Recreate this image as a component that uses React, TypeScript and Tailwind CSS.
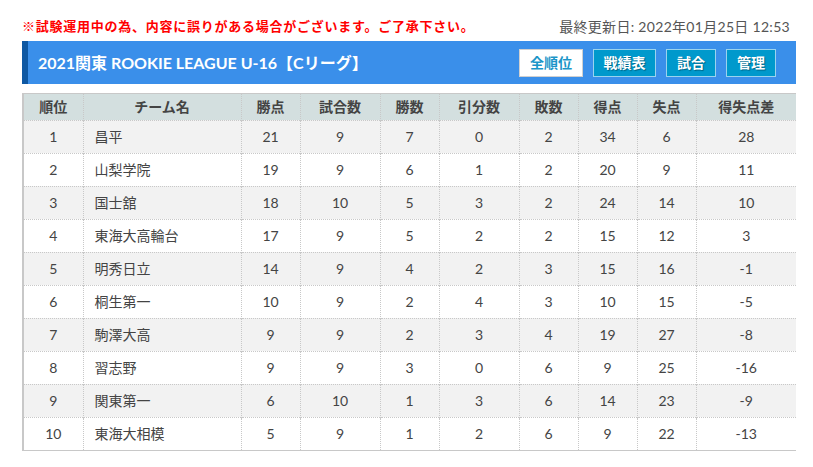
import React from "react";

const rows: [number, string, number, number, number, number, number, number, number, number][] = [
  [1, "昌平", 21, 9, 7, 0, 2, 34, 6, 28],
  [2, "山梨学院", 19, 9, 6, 1, 2, 20, 9, 11],
  [3, "国士舘", 18, 10, 5, 3, 2, 24, 14, 10],
  [4, "東海大高輪台", 17, 9, 5, 2, 2, 15, 12, 3],
  [5, "明秀日立", 14, 9, 4, 2, 3, 15, 16, -1],
  [6, "桐生第一", 10, 9, 2, 4, 3, 10, 15, -5],
  [7, "駒澤大高", 9, 9, 2, 3, 4, 19, 27, -8],
  [8, "習志野", 9, 9, 3, 0, 6, 9, 25, -16],
  [9, "関東第一", 6, 10, 1, 3, 6, 14, 23, -9],
  [10, "東海大相模", 5, 9, 1, 2, 6, 9, 22, -13],
];

const headers = ["順位", "チーム名", "勝点", "試合数", "勝数", "引分数", "敗数", "得点", "失点", "得失点差"];
const widths = [59, 158, 59, 80, 59, 80, 59, 59, 59, 100];

export default function App() {
  return (
    <div
      className="w-[813px] h-[467px] bg-white text-[#444]"
      style={{ fontFamily: 'Lato, "Noto Sans CJK JP", sans-serif' }}
    >
      <div className="px-[22px] pt-[16px] w-[818px]">
        <div className="flex items-center justify-between h-[21px] pr-[6px]">
          <span className="text-[13px] font-bold text-[#ff0000] tracking-[0.75px]">
            ※試験運用中の為、内容に誤りがある場合がございます。ご了承下さい。
          </span>
          <span className="text-[14px] text-[#555] tracking-[0.3px]">最終更新日: 2022年01月25日 12:53</span>
        </div>
        <div className="mt-[4px] h-[43px] w-[774px] flex bg-[#3a8fea]">
          <div className="w-[6px] bg-[#0e58a3]" />
          <div className="flex-1 flex items-center justify-between pl-[10px] pr-[20px]">
            <span className="text-white font-bold text-[16px]">2021関東 ROOKIE LEAGUE U-16【Cリーグ】</span>
            <div className="flex gap-[10px] items-center">
              <div className="w-[64px] h-[28px] bg-white border border-[#d0d0d0] flex items-center justify-center text-[14px] font-bold text-[#1b95c8]">
                全順位
              </div>
              <div className="w-[63px] h-[28px] bg-[#0099cc] border border-[#9ad3ee] flex items-center justify-center text-[14px] font-bold text-white [text-shadow:1px_1px_1px_rgba(0,0,0,0.35)]">
                戦績表
              </div>
              <div className="w-[50px] h-[28px] bg-[#0099cc] border border-[#9ad3ee] flex items-center justify-center text-[14px] font-bold text-white [text-shadow:1px_1px_1px_rgba(0,0,0,0.35)]">
                試合
              </div>
              <div className="w-[50px] h-[28px] bg-[#0099cc] border border-[#9ad3ee] flex items-center justify-center text-[14px] font-bold text-white [text-shadow:1px_1px_1px_rgba(0,0,0,0.35)]">
                管理
              </div>
            </div>
          </div>
        </div>
        <div className="mt-[9px] w-[774px] border border-[#c8c8c8] border-l-2">
          <table className="table-fixed w-full border-collapse text-[14px]">
            <colgroup>
              {widths.map((w, i) => (
                <col key={i} style={{ width: w }} />
              ))}
            </colgroup>
            <thead>
              <tr className="bg-[#d3dfdf] h-[26px]">
                {headers.map((h, i) => (
                  <th
                    key={i}
                    className="font-bold text-[#444] text-center border-l border-dotted border-[#c8c8c8] first:border-l-0"
                  >
                    {h}
                  </th>
                ))}
              </tr>
            </thead>
            <tbody>
              {rows.map((r, ri) => (
                <tr
                  key={ri}
                  className={`h-[33px] border-t border-dotted border-[#c8c8c8] ${ri % 2 === 0 ? "bg-[#f2f2f2]" : "bg-white"}`}
                >
                  {r.map((c, ci) => (
                    <td
                      key={ci}
                      className={`border-l border-dotted border-[#c8c8c8] first:border-l-0 text-[#444] ${ci === 1 ? "text-left pl-[11px]" : "text-center"}`}
                    >
                      {c}
                    </td>
                  ))}
                </tr>
              ))}
            </tbody>
          </table>
        </div>
      </div>
    </div>
  );
}
